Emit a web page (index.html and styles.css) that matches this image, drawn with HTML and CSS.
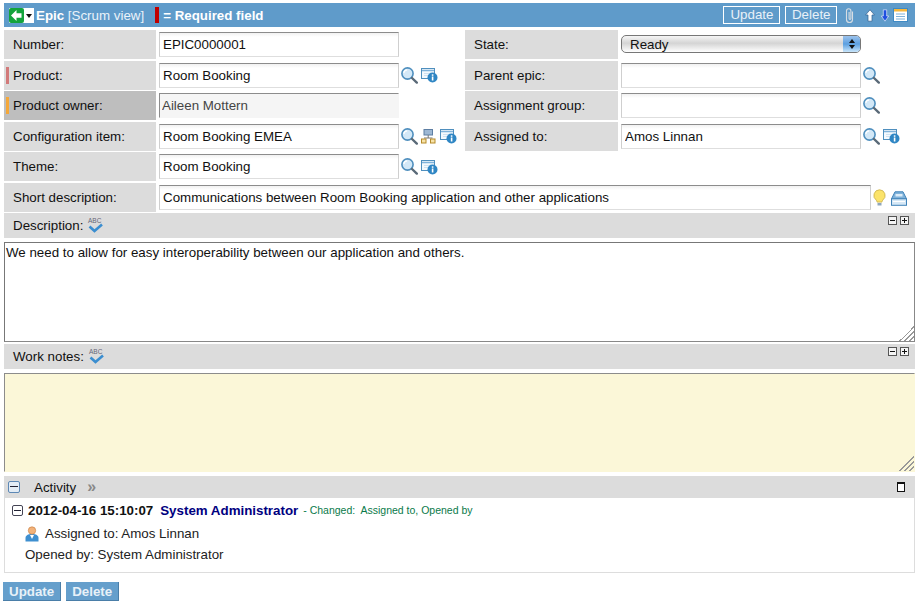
FILE: index.html
```html
<!DOCTYPE html>
<html lang="en">
<head>
    <meta charset="UTF-8">
    <title>Epic [Scrum view]</title>
    <link rel="stylesheet" href="styles.css">
</head>
<body>
    <svg class="defs" width="0" height="0">
        <symbol id="i-search" viewBox="0 0 17 17">
            <circle cx="6.500" cy="6.500" r="5.600" fill="#d3e8f7" stroke="#4f8fbe" stroke-width="1.600"/>
            <path d="M2.800 6a3.700 3.700 0 0 1 3.400-3.200" fill="none" stroke="#fff" stroke-width="1.200"/>
            <path d="M11 11l4.800 4.600" stroke="#5a6a78" stroke-width="2.400" stroke-linecap="round"/>
        </symbol>
        <symbol id="i-ref" viewBox="0 0 17 16">
            <rect x="0.500" y="1.500" width="13" height="10" fill="#f4f9fd" stroke="#4f8fbe"/>
            <path d="M1 3.500h12" stroke="#7fb2da" stroke-width="1.500"/>
            <path d="M3 6.500h6M3 8.500h5" stroke="#cfe2f1"/>
            <circle cx="11.500" cy="10.500" r="5" fill="#2f86c4"/>
            <rect x="10.800" y="9.500" width="1.600" height="4" fill="#fff"/>
            <rect x="10.800" y="7.300" width="1.600" height="1.500" fill="#fff"/>
        </symbol>
        <symbol id="i-tree" viewBox="0 0 15 15">
            <rect x="3" y="0.500" width="8.500" height="5.500" fill="#9db7d3" stroke="#5d7ea3"/>
            <path d="M7.200 6v3M3 9h8.500" stroke="#777" fill="none"/>
            <rect x="0.500" y="10" width="4.500" height="4" fill="#f7e3a8" stroke="#b58a2a"/>
            <rect x="9.500" y="10" width="4.500" height="4" fill="#f7e3a8" stroke="#b58a2a"/>
        </symbol>
    </svg>

    <div class="page">
        <div class="header">
            <span class="back">
                <svg width="15" height="15" viewBox="0 0 15 15">
                    <rect width="15" height="15" rx="2" fill="#14a33c"/>
                    <path d="M7.500 2L2 7.500 7.500 13V9.800h5V5.200h-5z" fill="#fff"/>
                </svg>
                <span class="caret"></span>
            </span>
            <span class="title"><b>Epic</b> [Scrum view]</span>
            <span class="req-mark"></span>
            <b class="req-text">= Required field</b>
            <span class="header-right">
                <button class="head-btn">Update</button>
                <button class="head-btn head-btn-delete">Delete</button>
                <svg class="clip" width="9" height="15" viewBox="0 0 9 15">
                    <path d="M7.500 3.500v8a3 3 0 0 1-6 0V3a2.200 2.200 0 0 1 4.400 0v7.500a.9.900 0 0 1-1.800 0V4" fill="none" stroke="#d6dde3" stroke-width="1.100"/>
                </svg>
                <svg class="arrow-up" width="10" height="13" viewBox="0 0 10 13">
                    <path d="M5 .8L9.500 6H7v6.200H3V6H.5z" fill="#fff" stroke="#2f5f8f" stroke-width="0.700"/>
                </svg>
                <svg class="arrow-down" width="8" height="13" viewBox="0 0 8 13">
                    <path d="M4 12.200L.3 7h2V.8h3.400V7h2z" fill="#1f4fe0" stroke="#fff" stroke-width="0.600"/>
                </svg>
                <svg class="list-ico" width="15" height="14" viewBox="0 0 15 14">
                    <rect x=".5" y=".5" width="14" height="13" fill="#fff" stroke="#3f8ac4"/>
                    <rect x="1" y="1" width="13" height="2.500" fill="#f6b73c"/>
                    <path d="M3 6h9M3 8.500h9M3 11h9" stroke="#7fb2da"/>
                </svg>
            </span>
        </div>

        <div class="row">
            <label class="field-label">Number:</label>
            <input class="field" value="EPIC0000001">
            <span class="icons"></span>
            <label class="field-label right-label">State:</label>
            <div class="select">
                <span>Ready</span>
                <span class="select-arrows"><i class="up"></i><i class="down"></i></span>
            </div>
        </div>
        <div class="row">
            <label class="field-label"><i class="mark mark-red"></i>Product:</label>
            <input class="field" value="Room Booking">
            <span class="icons">
                <svg class="ico"><use href="#i-search"/></svg>
                <svg class="ico ico-ref"><use href="#i-ref"/></svg>
            </span>
            <label class="field-label right-label">Parent epic:</label>
            <input class="field">
            <span class="icons">
                <svg class="ico"><use href="#i-search"/></svg>
            </span>
        </div>
        <div class="row">
            <label class="field-label label-dark"><i class="mark mark-orange"></i>Product owner:</label>
            <input class="field field-readonly" value="Aileen Mottern" readonly>
            <span class="icons"></span>
            <label class="field-label right-label">Assignment group:</label>
            <input class="field">
            <span class="icons">
                <svg class="ico"><use href="#i-search"/></svg>
            </span>
        </div>
        <div class="row">
            <label class="field-label">Configuration item:</label>
            <input class="field" value="Room Booking EMEA">
            <span class="icons">
                <svg class="ico"><use href="#i-search"/></svg>
                <svg class="ico ico-tree"><use href="#i-tree"/></svg>
                <svg class="ico ico-ref"><use href="#i-ref"/></svg>
            </span>
            <label class="field-label right-label">Assigned to:</label>
            <input class="field" value="Amos Linnan">
            <span class="icons">
                <svg class="ico"><use href="#i-search"/></svg>
                <svg class="ico ico-ref"><use href="#i-ref"/></svg>
            </span>
        </div>
        <div class="row">
            <label class="field-label">Theme:</label>
            <input class="field" value="Room Booking">
            <span class="icons">
                <svg class="ico"><use href="#i-search"/></svg>
                <svg class="ico ico-ref"><use href="#i-ref"/></svg>
            </span>
        </div>
        <div class="row">
            <label class="field-label">Short description:</label>
            <input class="field field-wide" value="Communications between Room Booking application and other applications">
            <span class="icons icons-short">
                <svg width="13" height="18" viewBox="0 0 13 18">
                    <path d="M6.500.8a5.700 5.700 0 0 0-3.300 10.300c.6.600.8 1.300.8 2h5c0-.7.2-1.400.8-2A5.700 5.700 0 0 0 6.500.8z" fill="#fbe36a" stroke="#c9b04a" stroke-width=".8"/>
                    <path d="M4.500 14h4v2.500h-4z" fill="#8fa6bb"/>
                </svg>
                <svg width="16" height="15" viewBox="0 0 16 15">
                    <path d="M4 .8h8l3.500 7H.5z" fill="#7fb2da" stroke="#3f82b8"/>
                    <path d="M4.500 5.500h7V3h-7z" fill="#dcecf8"/>
                    <rect x=".5" y="7.800" width="15" height="6.500" fill="#d6e8f6" stroke="#3f82b8"/>
                    <path d="M2 10.500h12" stroke="#fff"/>
                </svg>
            </span>
        </div>

        <div class="section-bar section-desc">
            <span>Description:</span>
            <svg class="abc" viewBox="0 0 17 17">
                <text x="1" y="6" class="abc-text">ABC</text>
                <path d="M2.500 9.500l5 4.500 7.500-6.500" fill="none" stroke="#3b8ed0" stroke-width="2.600"/>
            </svg>
            <span class="toggles"><i class="toggle toggle-minus"></i><i class="toggle toggle-plus"></i></span>
        </div>
        <textarea class="text-box desc-box">We need to allow for easy interoperability between our application and others.</textarea>

        <div class="section-bar section-notes">
            <span>Work notes:</span>
            <svg class="abc" viewBox="0 0 17 17">
                <text x="1" y="6" class="abc-text">ABC</text>
                <path d="M2.500 9.500l5 4.500 7.500-6.500" fill="none" stroke="#3b8ed0" stroke-width="2.600"/>
            </svg>
            <span class="toggles"><i class="toggle toggle-minus"></i><i class="toggle toggle-plus"></i></span>
        </div>
        <textarea class="text-box notes-box"></textarea>

        <div class="activity-bar">
            <i class="collapse collapse-blue"></i>
            <span class="activity-title">Activity</span>
            <span class="chevrons">&raquo;</span>
            <span class="stream-icon"></span>
        </div>
        <div class="activity-body">
            <div class="entry-head">
                <i class="collapse"></i>
                <b class="entry-date">2012-04-16 15:10:07</b>
                <b class="entry-user">System Administrator</b>
                <span class="entry-change">- Changed:&nbsp; Assigned to, Opened by</span>
            </div>
            <div class="entry-line entry-first">
                <svg class="user-ico" width="14" height="16" viewBox="0 0 14 16">
                    <path d="M.5 15.500v-3.500c0-2.500 2.500-4 6.500-4s6.500 1.500 6.500 4v3.500z" fill="#3e8fd0"/>
                    <path d="M5 9l2 4 2-4z" fill="#fff"/>
                    <circle cx="7" cy="4.500" r="3.700" fill="#f2b27a" stroke="#c47a3c" stroke-width=".6"/>
                </svg>
                Assigned to: Amos Linnan
            </div>
            <div class="entry-line">Opened by: System Administrator</div>
        </div>

        <div class="footer-btns">
            <button class="foot-btn">Update</button>
            <button class="foot-btn">Delete</button>
        </div>
    </div>
</body>
</html>
```

FILE: styles.css
```css
body {
    margin: 0;
    background: white;
    font-family: "Liberation Sans", Arial, sans-serif;
    font-size: 13.330px;
    color: #111;
    overflow: hidden;
}
.defs {
    position: absolute;
}
.abc-text {
    font-family: "Liberation Sans", Arial, sans-serif;
    font-size: 6.500px;
    fill: #667;
}
.page {
    width: 911px;
    padding: 3px 0 0 4px;
}
.header {
    display: flex;
    align-items: center;
    height: 24px;
    background: #5f9bca;
    color: white;
}
.back {
    display: flex;
    width: 25px;
    height: 15px;
    margin-left: 5px;
    background: white;
}
.caret {
    width: 0;
    height: 0;
    margin: 6px 0 0 2px;
    border: 3.500px solid transparent;
    border-top: 4px solid #111;
    border-bottom: 0;
}
.title {
    margin-left: 2px;
    color: #eaf2f9;
}
.title b {
    color: white;
}
.req-mark {
    width: 4px;
    height: 16px;
    margin-left: 11px;
    background: #c00000;
}
.req-text {
    margin-left: 4px;
}
.header-right {
    display: flex;
    align-items: center;
    margin-left: auto;
    margin-right: 7px;
}
.head-btn {
    height: 18px;
    padding: 0 6px;
    border: 1px solid white;
    background: transparent;
    color: #e8f1f8;
    font: 13.330px "Liberation Sans", Arial, sans-serif;
    line-height: 14px;
}
.head-btn + .head-btn {
    margin-left: 5px;
}
.head-btn-delete {
    padding: 0 5.500px;
}
.clip {
    margin: 0 11px 0 8px;
}
.arrow-down {
    margin-left: 6px;
}
.list-ico {
    margin-left: 4px;
}

.row {
    display: flex;
    align-items: center;
    height: 29px;
    margin-top: 1.500px;
}
.header + .row {
    margin-top: 3px;
}
.field-label {
    position: relative;
    display: flex;
    align-items: center;
    flex: none;
    width: 143px;
    height: 29px;
    padding-left: 9px;
    background: #dcdcdc;
}
.label-dark {
    background: #bebebe;
}
.right-label {
    width: 144px;
}
.mark {
    position: absolute;
    left: 2px;
    top: 6px;
    width: 3px;
    height: 17px;
}
.mark-red {
    background: #d27a7a;
}
.mark-orange {
    background: #f5a83a;
}
.field {
    flex: none;
    box-sizing: border-box;
    width: 240px;
    height: 25px;
    margin-left: 3px;
    padding: 0 3px;
    border: 1px solid #cfcfcf;
    border-top-color: #8c8c8c;
    border-bottom-color: #dedede;
    border-radius: 0;
    background: linear-gradient(#f1f1f1, white 4px);
    outline: none;
    font: 13.330px "Liberation Sans", Arial, sans-serif;
    color: #111;
}
.field-readonly {
    padding-left: 2px;
    border-color: #8c8c8c transparent transparent #8c8c8c;
    background: #f5f5f5;
    color: #444;
}
.field-wide {
    width: 712px;
}
.icons {
    display: flex;
    align-items: center;
    flex: none;
    gap: 3px;
    width: 66px;
    padding-left: 2px;
    box-sizing: border-box;
}
.icons-short {
    gap: 5px;
    width: auto;
    padding-top: 2px;
}
.ico {
    width: 17px;
    height: 17px;
}
.ico-ref {
    width: 17px;
    height: 16px;
}
.ico-tree {
    width: 15px;
    height: 15px;
    margin-right: 1px;
}
.select {
    display: flex;
    align-items: center;
    justify-content: space-between;
    box-sizing: border-box;
    width: 240px;
    height: 18px;
    margin: -1px 0 0 3px;
    padding-left: 8px;
    border: 1px solid #777;
    border-radius: 5px;
    background: linear-gradient(#f6f6f6, #d4d4d4 45%, #fff);
    overflow: hidden;
}
.select-arrows {
    display: flex;
    flex-direction: column;
    align-items: center;
    justify-content: center;
    gap: 2px;
    width: 17px;
    height: 100%;
    background: linear-gradient(#9cc3ec, #5b9fe0 50%, #c9e6fb);
}
.select-arrows i {
    width: 0;
    height: 0;
    border: 3px solid transparent;
}
.select-arrows .up {
    border-top: 0;
    border-bottom: 4px solid #111;
}
.select-arrows .down {
    border-bottom: 0;
    border-top: 4px solid #111;
}

.section-bar {
    display: flex;
    align-items: center;
    gap: 4px;
    height: 25px;
    padding-left: 9px;
    background: #dcdcdc;
}
.section-desc {
    margin-top: 1.500px;
}
.section-notes {
    margin-top: 2px;
}
.abc {
    width: 17px;
    height: 17px;
}
.toggles {
    display: flex;
    gap: 3px;
    align-self: flex-start;
    margin: 3px 6px 0 auto;
}
.toggle {
    position: relative;
    box-sizing: border-box;
    width: 9px;
    height: 9px;
    border: 1px solid #555;
    background: #f4f4f4;
}
.toggle::before {
    content: "";
    position: absolute;
    left: 1px;
    right: 1px;
    top: 3px;
    height: 1px;
    background: #111;
}
.toggle-plus::after {
    content: "";
    position: absolute;
    top: 1px;
    bottom: 1px;
    left: 3px;
    width: 1px;
    background: #111;
}
.text-box {
    display: block;
    box-sizing: border-box;
    width: 100%;
    padding: 2px 1px;
    border: 1px solid #ccc;
    border-radius: 0;
    outline: none;
    resize: both;
    font: 13.330px "Liberation Sans", Arial, sans-serif;
    color: #111;
}
.text-box::-webkit-resizer {
    background: linear-gradient(135deg, transparent 50%, #999 50%, #999 56%, transparent 56%, transparent 66%, #999 66%, #999 72%, transparent 72%, transparent 82%, #999 82%, #999 88%, transparent 88%);
}
.desc-box {
    height: 100px;
    margin: 4px 0 0;
    border-color: #777 #888 #888 #777;
}
.notes-box {
    height: 99px;
    margin: 4px 0 0;
    background: #fbf7d8;
    border-color: #8c8c8c #fbf7d8 #fbf7d8 #8c8c8c;
}

.activity-bar {
    display: flex;
    align-items: center;
    height: 22px;
    margin-top: 4px;
    padding-left: 4px;
    background: #dcdcdc;
}
.collapse {
    box-sizing: border-box;
    position: relative;
    display: block;
    flex: none;
    width: 11px;
    height: 11px;
    border: 1px solid #445;
    border-radius: 2px;
    background: #fff;
}
.collapse::after {
    content: "";
    position: absolute;
    left: 1px;
    right: 1px;
    top: 4px;
    height: 1px;
    background: #223;
}
.collapse-blue {
    width: 12px;
    height: 12px;
    border-color: #5d88b5;
    background: #e3ecf5;
}
.activity-title {
    margin-left: 14px;
}
.chevrons {
    margin-left: 11px;
    color: #888;
    font-size: 16px;
    font-weight: bold;
}
.stream-icon {
    box-sizing: border-box;
    width: 8px;
    height: 10px;
    margin: 0 10px 0 auto;
    border: 1px solid #111;
    border-top-width: 2px;
    background: white;
}
.activity-body {
    box-sizing: border-box;
    height: 75px;
    padding-top: 3px;
    border: 1px solid #ddd;
    border-top: 0;
}
.entry-head {
    display: flex;
    align-items: center;
    height: 18px;
    padding-left: 7px;
}
.entry-date {
    margin-left: 5px;
}
.entry-user {
    margin-left: 7px;
    color: #00007f;
}
.entry-change {
    margin-left: 5px;
    color: #0a7a4a;
    font-size: 10.500px;
}
.entry-line {
    display: flex;
    align-items: center;
    height: 21px;
    padding-left: 20px;
    color: #222;
}
.entry-first {
    margin-top: 4px;
}
.user-ico {
    margin: 0 6px 0 0;
}
.footer-btns {
    display: flex;
    gap: 5px;
    margin: 9px 0 0 -1px;
}
.foot-btn {
    height: 19px;
    padding: 0 6px;
    border: 0;
    border-right: 1px solid #4a7ea8;
    border-bottom: 1px solid #4a7ea8;
    background: #659fcc;
    color: #e8f1f8;
    font: bold 13.330px "Liberation Sans", Arial, sans-serif;
}
```
